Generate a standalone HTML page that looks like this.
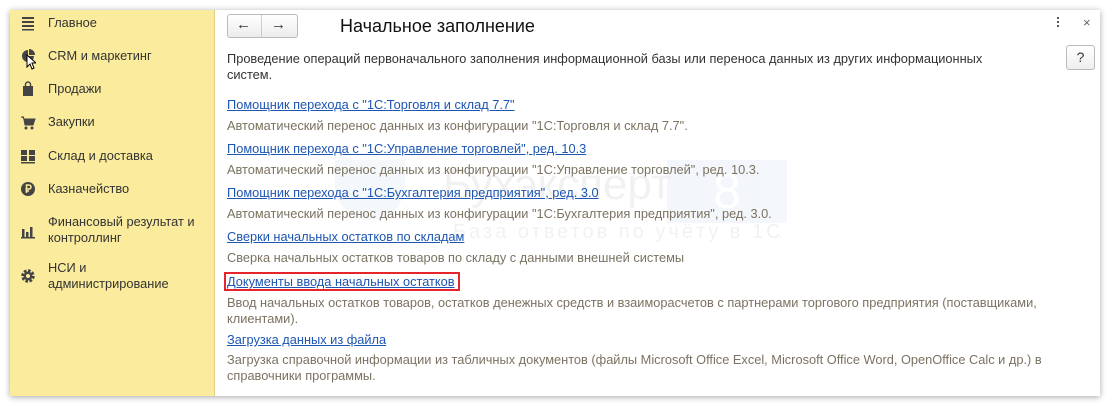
<!DOCTYPE html>
<html><head><meta charset="utf-8"><style>
body{margin:0;width:1110px;height:406px;background:#fff;font-family:"Liberation Sans",Arial,sans-serif;position:relative;overflow:hidden}
.frame{position:absolute;left:10px;top:10px;width:1090px;height:386px;background:#fff;box-shadow:0 1px 6px rgba(0,0,0,.35)}
.side{position:absolute;left:10px;top:10px;width:204px;height:386px;background:#fbec9d;border-right:1px solid #e0d18c}
.t{position:absolute;font-size:12.8px;color:#333;white-space:nowrap;line-height:16px}
.ic{position:absolute;left:20px;width:16px;height:16px}
a{position:absolute;font-size:12.8px;color:#1d55b3;text-decoration:underline;white-space:nowrap;line-height:16px}
.d{position:absolute;font-size:12.8px;color:#7b7261;white-space:nowrap;line-height:16px;left:227px}
</style></head><body>
<div class="frame"></div>
<div class="side"></div>
<!-- sidebar -->
<svg class="ic" style="top:15px" viewBox="0 0 16 16"><g fill="#444"><rect x="2" y="2" width="12" height="2"/><rect x="2" y="6" width="12" height="2"/><rect x="2" y="10" width="12" height="2"/><rect x="2" y="14" width="12" height="1.5"/></g></svg>
<div class="t" style="left:48px;top:15px">Главное</div>
<svg class="ic" style="top:48px" viewBox="0 0 16 16"><path d="M8 2A6 6 0 1 0 14 8H8Z" fill="#444"/><path d="M9 1A6 6 0 0 1 15 7H9Z" fill="#444"/></svg>
<svg style="position:absolute;left:26px;top:54px" width="10" height="16" viewBox="0 0 10 16"><path d="M1 1V13L4 10L6 15L8 14L6 9H10Z" fill="#fff" stroke="#000"/></svg>
<div class="t" style="left:48px;top:48px">CRM и маркетинг</div>
<svg class="ic" style="top:81px" viewBox="0 0 16 16"><path d="M3 5H13V15H3Z" fill="#444"/><path d="M5.5 6V3.5A2.5 2.5 0 0 1 10.5 3.5V6" fill="none" stroke="#444" stroke-width="1.4"/></svg>
<div class="t" style="left:48px;top:81px">Продажи</div>
<svg class="ic" style="top:115px" viewBox="0 0 16 16"><path d="M1 2H3.5L5 10H13L15 4H4" fill="#444" stroke="#444"/><circle cx="6" cy="13" r="1.5" fill="#444"/><circle cx="12" cy="13" r="1.5" fill="#444"/></svg>
<div class="t" style="left:48px;top:114px">Закупки</div>
<svg class="ic" style="top:148px" viewBox="0 0 16 16"><g fill="#444"><rect x="1" y="2" width="6" height="5"/><rect x="9" y="2" width="6" height="5"/><rect x="1" y="8" width="6" height="5"/><rect x="9" y="8" width="6" height="5"/><rect x="1" y="14" width="14" height="1.5"/></g></svg>
<div class="t" style="left:48px;top:148px">Склад и доставка</div>
<svg class="ic" style="top:181px" viewBox="0 0 16 16"><circle cx="8" cy="8" r="7" fill="#444"/><path d="M6.5 12V4H9a2 2 0 0 1 0 4H5.5M5.5 10H9" fill="none" stroke="#fbec9d" stroke-width="1.5"/></svg>
<div class="t" style="left:48px;top:181px">Казначейство</div>
<svg class="ic" style="top:223px" viewBox="0 0 16 16"><g fill="#444"><rect x="2" y="6" width="2.5" height="8"/><rect x="6" y="9" width="2.5" height="5"/><rect x="10" y="4" width="2.5" height="10"/><rect x="1" y="14" width="14" height="1.5"/></g></svg>
<div class="t" style="left:48px;top:214px">Финансовый результат и<br>контроллинг</div>
<svg class="ic" style="top:268px" viewBox="0 0 16 16"><circle cx="8" cy="8" r="5" fill="none" stroke="#444" stroke-width="3.5" stroke-dasharray="2.5 1.4"/><circle cx="8" cy="8" r="4.5" fill="#444"/><circle cx="8" cy="8" r="2" fill="#fbec9d"/></svg>
<div class="t" style="left:48px;top:260px">НСИ и<br>администрирование</div>
<!-- header -->
<div style="position:absolute;left:227px;top:14px;width:69px;height:22px;border:1px solid #bbb;border-radius:3px;background:linear-gradient(#fff,#ececec)"></div>
<div style="position:absolute;left:261px;top:15px;width:1px;height:22px;background:#ccc"></div>
<div class="t" style="left:236px;top:17px;font-size:15px;font-weight:bold;color:#333">←</div>
<div class="t" style="left:271px;top:17px;font-size:15px;font-weight:bold;color:#333">→</div>
<div class="t" style="left:340px;top:15px;font-size:18px;line-height:22px;color:#111">Начальное заполнение</div>
<div style="position:absolute;left:1057px;top:17px;width:2px;height:10px;background:repeating-linear-gradient(#555 0 2px,transparent 2px 4px)"></div>
<div class="t" style="left:1083px;top:15px;color:#666;font-size:13px">×</div>
<div style="position:absolute;left:1066px;top:45px;width:27px;height:23px;border:1px solid #bbb;border-radius:3px;background:linear-gradient(#fff,#eee);font-size:14px;text-align:center;line-height:23px;color:#333">?</div>
<!-- watermark -->
<div style="position:absolute;left:335px;top:160px;width:70px;height:60px;border-radius:0 0 35px 35px;background:#e6edf5;opacity:.4"></div>
<div class="t" style="left:443px;top:160px;font-size:44px;line-height:50px;color:#000;opacity:.05">Бухэксперт</div>
<div style="position:absolute;left:667px;top:160px;width:120px;height:63px;background:#e3ebf4;opacity:.4;color:#fff;font-size:50px;line-height:63px;text-align:center">8</div>
<div class="t" style="left:453px;top:220px;font-size:20px;line-height:24px;color:#000;opacity:.05;letter-spacing:3px">База ответов по учёту в 1С</div>
<!-- content -->
<div class="t" style="left:227px;top:51px;color:#333">Проведение операций первоначального заполнения информационной базы или переноса данных из других информационных<br>систем.</div>
<a style="left:227px;top:97px">Помощник перехода с "1С:Торговля и склад 7.7"</a>
<div class="d" style="top:118px">Автоматический перенос данных из конфигурации "1С:Торговля и склад 7.7".</div>
<a style="left:227px;top:141px">Помощник перехода с "1С:Управление торговлей", ред. 10.3</a>
<div class="d" style="top:162px">Автоматический перенос данных из конфигурации "1С:Управление торговлей", ред. 10.3.</div>
<a style="left:227px;top:185px">Помощник перехода с "1С:Бухгалтерия предприятия", ред. 3.0</a>
<div class="d" style="top:206px">Автоматический перенос данных из конфигурации "1С:Бухгалтерия предприятия", ред. 3.0.</div>
<a style="left:227px;top:229px">Сверки начальных остатков по складам</a>
<div class="d" style="top:250px">Сверка начальных остатков товаров по складу с данными внешней системы</div>
<div style="position:absolute;left:224px;top:272px;width:236px;height:19px;border:2px solid #e5242b;box-sizing:border-box"></div>
<a style="left:227px;top:274px">Документы ввода начальных остатков</a>
<div class="d" style="top:295px">Ввод начальных остатков товаров, остатков денежных средств и взаиморасчетов с партнерами торгового предприятия (поставщиками,<br>клиентами).</div>
<a style="left:227px;top:332px">Загрузка данных из файла</a>
<div class="d" style="top:352px">Загрузка справочной информации из табличных документов (файлы Microsoft Office Excel, Microsoft Office Word, OpenOffice Calc и др.) в<br>справочники программы.</div>
</body></html>
